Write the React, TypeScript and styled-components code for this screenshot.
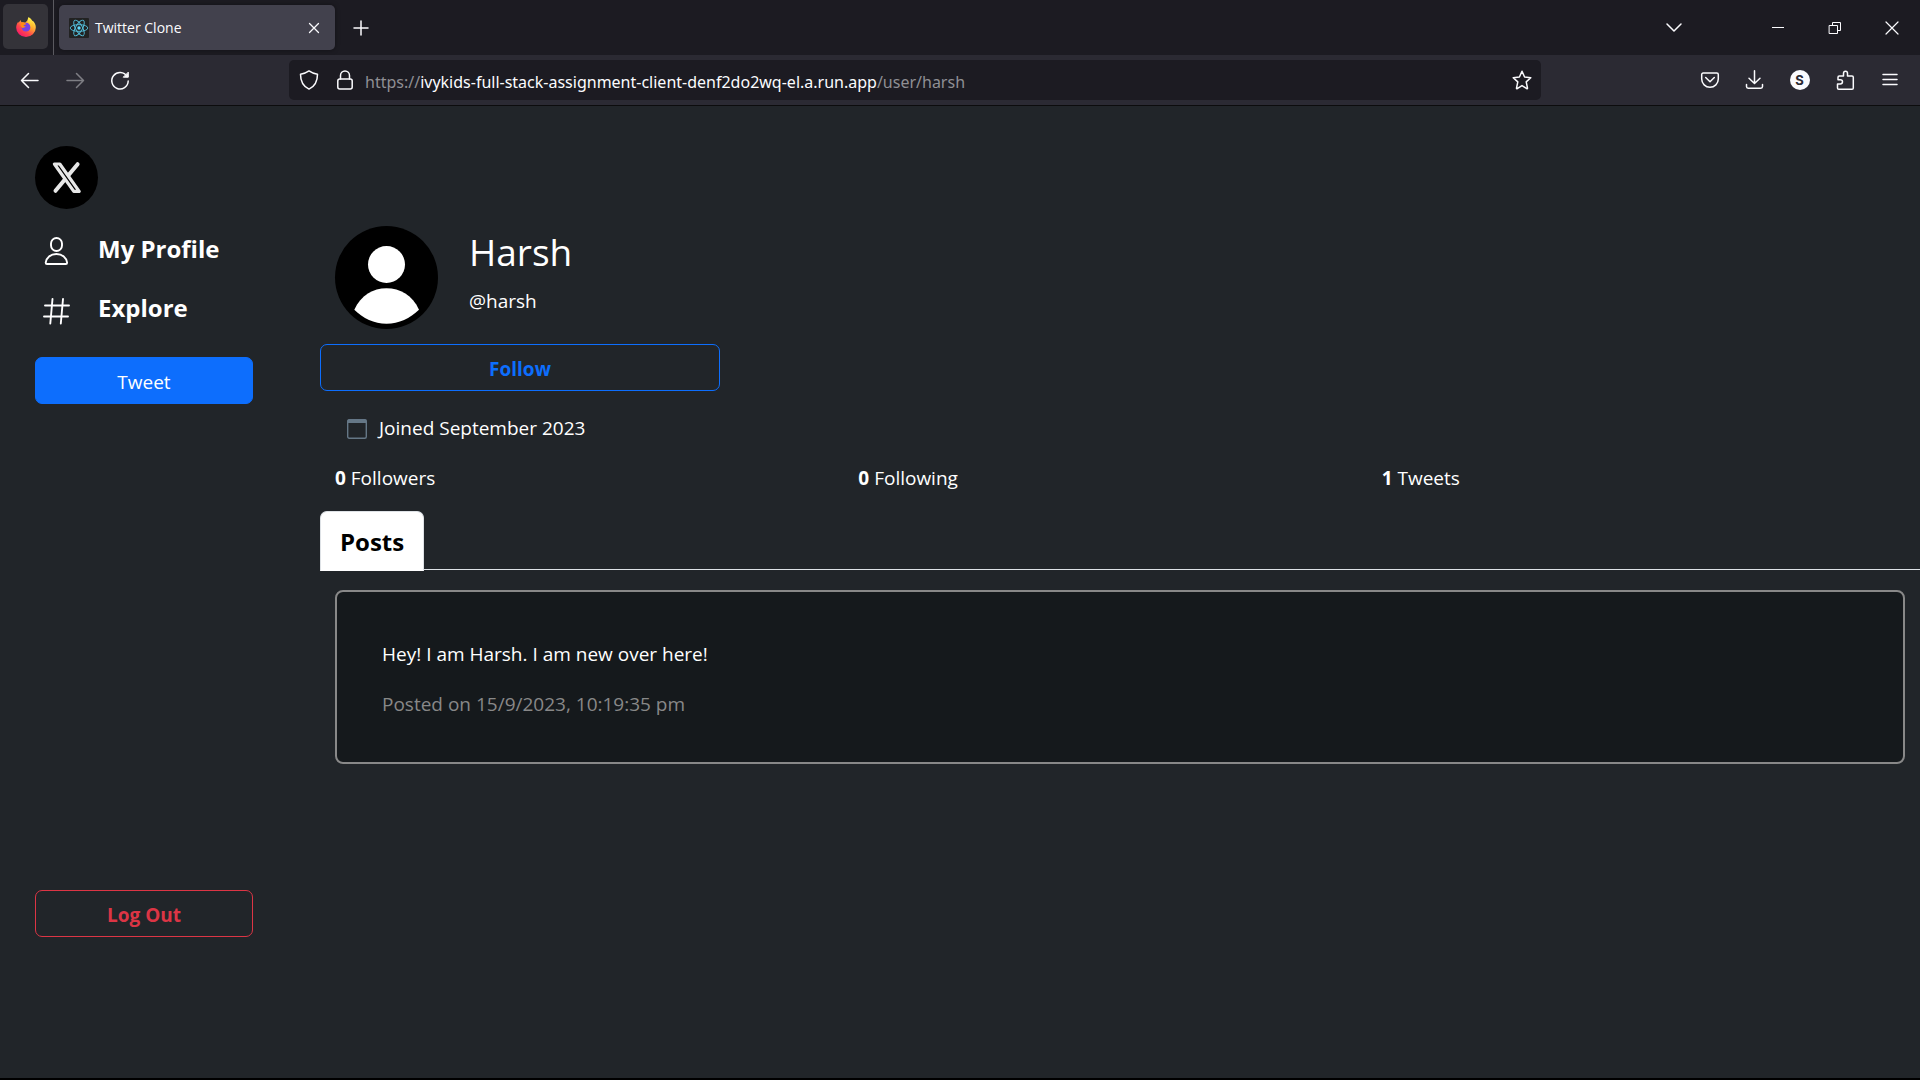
import React from "react";
import styled, { createGlobalStyle, css } from "styled-components";

const GlobalStyle = createGlobalStyle`
  *, *::before, *::after { box-sizing: border-box; }
  body {
    margin: 0;
    background: #212529;
    color: #fff;
    font-family: "Open Sans", "Noto Sans", sans-serif;
    font-size: 19px;
    line-height: 30px;
  }
  button { font: inherit; color: inherit; cursor: pointer; }
  h1, h2, p, ul { margin: 0; padding: 0; }
  svg { display: block; flex: none; overflow: visible; }
`;

const Window = styled.div`
  min-height: 100vh;
  display: flex;
  flex-direction: column;
  border-bottom: 2px solid #000;
`;

/* ---------- browser chrome ---------- */

const TabStrip = styled.header`
  display: flex;
  align-items: center;
  height: 55px;
  background: #1c1b22;
`;

const ViewButton = styled.button`
  display: grid;
  place-items: center;
  width: 45px;
  height: 45px;
  margin: 0 5px 2px 3px;
  padding: 0;
  border: 0;
  border-radius: 5px;
  background: #343339;
`;

const Divider = styled.span`
  width: 1px;
  height: 55px;
  background: #5b5a60;
`;

const BrowserTab = styled.div`
  display: flex;
  align-items: center;
  width: 276px;
  height: 45px;
  margin-left: 5px;
  padding: 0 10px;
  border-radius: 5px;
  background: #42414d;
  box-shadow: 0 0 5px rgba(0, 0, 0, 0.4);
`;

const TabTitle = styled.span`
  flex: 1;
  margin-left: 6px;
  padding-top: 1px;
  color: #fbfbfe;
  font-size: 14px;
  line-height: 20px;
`;

const PlainButton = styled.button<{ $width?: number; $dim?: boolean }>`
  display: grid;
  place-items: center;
  width: ${(p) => p.$width ?? 45}px;
  height: 40px;
  padding: 0;
  border: 0;
  background: none;
  color: #fbfbfe;
  opacity: ${(p) => (p.$dim ? 0.4 : 1)};
`;

const WindowControls = styled.div`
  display: flex;
  margin-left: auto;
`;

const ListTabs = styled.div`
  margin-right: 53px;
`;

const Toolbar = styled.nav`
  display: flex;
  align-items: center;
  height: 51px;
  padding: 0 8px 0 7px;
  background: #2b2a33;
  border-bottom: 1px solid #0c0c0d;
`;

const NavButtons = styled.div`
  display: flex;
  flex: 1 0 282px;
`;

const AddressBar = styled.div`
  display: flex;
  align-items: center;
  flex: 0 1 1252px;
  height: 40px;
  border-radius: 5px;
  background: #1c1b22;
`;

const Url = styled.span`
  flex: 1;
  margin-left: 4px;
  padding-top: 3px;
  overflow: hidden;
  white-space: nowrap;
  color: #8f8f94;
  font-family: "Noto Sans", "Open Sans", sans-serif;
  font-size: 16px;
  line-height: 24px;

  b { font-weight: 400; color: #fbfbfe; }
`;

const ToolbarActions = styled.div`
  display: flex;
  flex: 1 0 371px;
  justify-content: flex-end;
`;

const Account = styled.span`
  display: grid;
  place-items: center;
  width: 20px;
  height: 20px;
  border-radius: 50%;
  background: #fbfbfe;
  color: #2b2a33;
  font: 700 13px/20px Inter, sans-serif;
`;

/* ---------- page ---------- */

const Page = styled.div`
  flex: 1;
  display: grid;
  grid-template-columns: minmax(0, 1fr) minmax(0, 5fr);
`;

const Sidebar = styled.aside`
  display: flex;
  flex-direction: column;
  padding: 40px 67px 141px 35px;
`;

const Menu = styled.ul`
  display: flex;
  flex-direction: column;
  gap: 23px;
  margin: 22px 0 31px;
  list-style: none;
`;

const MenuLink = styled.a`
  display: flex;
  align-items: center;
  gap: 27px;
  padding-left: 8px;
  color: #fff;
  font-size: 24px;
  font-weight: 700;
  line-height: 36px;
  text-decoration: none;
`;

const ActionButton = styled.button<{ $variant: "primary" | "follow" | "danger" }>`
  height: 47px;
  padding: 2px 15px 0;
  border: 1px solid #0d6efd;
  border-radius: 7px;
  background: none;
  font-weight: 700;

  ${(p) => p.$variant === "primary" && css`
    background: #0d6efd;
    font-weight: 400;
  `}
  ${(p) => p.$variant === "follow" && css`
    width: 25%;
    min-width: 200px;
    color: #0d6efd;
  `}
  ${(p) => p.$variant === "danger" && css`
    margin-top: auto;
    border-color: #dc3545;
    color: #dc3545;
  `}
`;

const Main = styled.main`
  padding-top: 120px;
`;

const Profile = styled.section`
  display: flex;
  gap: 31px;
  padding: 0 15px;
  margin-bottom: 15px;
`;

const Name = styled.h1`
  font-size: 37px;
  font-weight: 400;
  line-height: 48px;
  margin: 2px 0 10px;
`;

const Joined = styled.p`
  display: flex;
  align-items: center;
  gap: 12px;
  padding-left: 27px;
  margin-top: 22px;
`;

const Stats = styled.section`
  display: grid;
  grid-template-columns: repeat(3, minmax(0, 1fr));
  padding: 0 15px;
  margin: 20px 0 18px;
`;

const Tabs = styled.div`
  display: flex;
  height: 59px;
  border-bottom: 1px solid #dee2e6;
`;

const Tab = styled.button`
  height: 60px;
  padding: 2px 19px 0;
  border: 1px solid #dee2e6;
  border-bottom-color: #fff;
  border-radius: 7px 7px 0 0;
  background: #fff;
  color: #000;
  font-size: 24px;
  font-weight: 700;
`;

const Post = styled.article`
  margin: 20px 15px;
  padding: 47px 45px 43px;
  border: 2px solid #888;
  border-radius: 8px;
  background: #15191c;
`;

const Posted = styled.p`
  margin-top: 20px;
  color: #888;
`;

/* ---------- drawings ---------- */

type IconProps = { size?: number; children: React.ReactNode };

const Line = ({ size = 20, children }: IconProps) => (
  <svg
    width={size}
    height={size}
    viewBox="0 0 20 20"
    fill="none"
    stroke="currentColor"
    strokeWidth="1.5"
    strokeLinecap="round"
    strokeLinejoin="round"
    aria-hidden="true"
  >
    {children}
  </svg>
);

const FirefoxLogo = () => (
  <svg width="20" height="20" viewBox="0 0 20 20" aria-hidden="true">
    <defs>
      <linearGradient id="ffBody" x1="0.85" y1="0.1" x2="0.2" y2="0.95">
        <stop offset="0" stopColor="#fff44f" />
        <stop offset="0.35" stopColor="#ffa436" />
        <stop offset="0.65" stopColor="#ff4a4a" />
        <stop offset="1" stopColor="#f5156c" />
      </linearGradient>
      <linearGradient id="ffTail" x1="0.5" y1="0" x2="0.5" y2="1">
        <stop offset="0" stopColor="#fff44f" />
        <stop offset="0.6" stopColor="#ffbd2e" />
        <stop offset="1" stopColor="#ff8a16" stopOpacity="0.3" />
      </linearGradient>
    </defs>
    <path
      d="M12.6 0.3C14.6 1.6 15.4 3 15.8 4.2c0.5-0.1 0.8-0.2 1-0.5C18.7 5.5 20 8 19.8 10.8A9.8 9.3 0 0 1 0.2 10.7C0.2 8.5 0.9 6.3 2.3 4.7c0 0.5 0.1 0.8 0.3 1.1C3.2 4.7 4.2 3.8 4.7 3c0 1 0.3 1.7 0.9 2.3 1.5-0.2 2.5 0 3.6 0.5C10.2 4.5 12.5 3.5 12.6 0.3z"
      fill="url(#ffBody)"
    />
    <circle cx="10" cy="10.2" r="4.4" fill="#7542e5" />
    <path d="M5.600 5.300C8 5 9.500 6 10.300 7.200 9 7.400 8 8 7.300 9c0.700 0.200 1.600 0.200 2.300 0-0.500 1.500-1.800 1.800-3.400 1.900C4 9.500 4 6.800 5.600 5.300z" fill="#ff8a16" />
    <path d="M12.600 0.300C17 3 17.500 6 17.600 9c-0.100 3-1.600 5-3.900 5.800 1.500-2.800 1.500-6-0.500-8.300-1.300-1.500-2.400-3.200-0.600-6.200z" fill="url(#ffTail)" />
  </svg>
);

const ReactLogo = () => (
  <svg width="20" height="20" viewBox="0 0 20 20" aria-hidden="true">
    <rect width="20" height="20" rx="1" fill="#222" />
    <g fill="none" stroke="#53c1de" strokeWidth="0.9">
      <ellipse cx="10" cy="10" rx="8.800" ry="3.400" />
      <ellipse cx="10" cy="10" rx="8.800" ry="3.400" transform="rotate(60 10 10)" />
      <ellipse cx="10" cy="10" rx="8.800" ry="3.400" transform="rotate(120 10 10)" />
    </g>
    <circle cx="10" cy="10" r="1.700" fill="#61dafb" />
  </svg>
);

const XLogo = () => (
  <svg width="63" height="63" viewBox="0 0 63 63" role="img" aria-label="X">
    <circle cx="31.500" cy="31.500" r="31.500" fill="#000" />
    <g fill="none" stroke="#e7e7e7" strokeLinecap="round" strokeLinejoin="round">
      <path d="M42.600 18.200L20.500 44.800" strokeWidth="4" />
      <path d="M19.400 18h5.400L44.200 45.400h-5.400z" strokeWidth="3.200" fill="#000" />
    </g>
  </svg>
);

const PersonIcon = () => (
  <svg width="28" height="32" viewBox="0 -2 28 32" fill="none" stroke="#fff" strokeWidth="1.900" aria-hidden="true">
    <rect x="8" y="3" width="11" height="13" rx="5.500" />
    <path d="M4 29c-1 0-1.300-0.500-1.300-1.300C3.300 22.500 7.500 19 13.400 19s10.100 3.500 10.700 8.700c0 0.800-0.400 1.300-1.300 1.300z" />
  </svg>
);

const HashIcon = () => (
  <svg width="28" height="32" viewBox="0 -4 28 32" fill="none" stroke="#fff" strokeWidth="1.900" strokeLinecap="round" aria-hidden="true">
    <path d="M9.500 3L7.300 27.500M20 3l-2.200 24.500M2 9.500h24M1 20.500h24" />
  </svg>
);

const Avatar = () => (
  <svg width="103" height="103" viewBox="0 0 103 103" role="img" aria-label="Harsh">
    <circle cx="51.500" cy="51.500" r="51.500" fill="#000" />
    <circle cx="51.500" cy="38.500" r="18.500" fill="#fff" />
    <path d="M19.300 83.800C26 69 38 62.300 51.500 62.300S77.500 69 84 83.800C75 92.500 64 97.800 51.500 97.800S28 92.500 19.300 83.800z" fill="#fff" />
  </svg>
);

const CalendarIcon = () => (
  <svg width="20" height="20" viewBox="0 -1 20 20" aria-hidden="true">
    <rect x="0.700" y="0.700" width="18.600" height="18.600" rx="1.500" fill="none" stroke="#657786" strokeWidth="1.400" />
    <path d="M0.500 1.500a1 1 0 0 1 1-1h17a1 1 0 0 1 1 1V4h-19z" fill="#657786" />
  </svg>
);

const stats = [
  { count: 0, label: "Followers" },
  { count: 0, label: "Following" },
  { count: 1, label: "Tweets" },
];

export default function App() {
  return (
    <Window>
      <GlobalStyle />
      <TabStrip>
        <ViewButton aria-label="Firefox View"><FirefoxLogo /></ViewButton>
        <Divider />
        <BrowserTab>
          <ReactLogo />
          <TabTitle>Twitter Clone</TabTitle>
          <PlainButton $width={22} aria-label="Close tab">
            <Line><path d="M5.500 5.500l9 9M14.500 5.500l-9 9" strokeWidth="1.300" /></Line>
          </PlainButton>
        </BrowserTab>
        <PlainButton $width={51} aria-label="New tab">
          <Line><path d="M10 3v14M3 10h14" /></Line>
        </PlainButton>
        <WindowControls>
          <ListTabs>
            <PlainButton aria-label="List all tabs">
              <Line><path d="M3 6l7 7 7-7" /></Line>
            </PlainButton>
          </ListTabs>
          <PlainButton $width={57} aria-label="Minimise">
            <Line><path d="M4 9.500h12" strokeWidth="1" strokeLinecap="butt" /></Line>
          </PlainButton>
          <PlainButton $width={57} aria-label="Restore">
            <Line><path d="M4.500 7.500h8v8h-8zM7.500 7.500v-3h8v8h-3" strokeWidth="1" strokeLinejoin="miter" /></Line>
          </PlainButton>
          <PlainButton $width={57} aria-label="Close window">
            <Line><path d="M4 4l12 12M16 4L4 16" strokeWidth="1.200" /></Line>
          </PlainButton>
        </WindowControls>
      </TabStrip>

      <Toolbar>
        <NavButtons>
          <PlainButton aria-label="Back">
            <Line><path d="M18 10.500H1.500M8.500 3.500l-7 7 7 7" /></Line>
          </PlainButton>
          <PlainButton $dim disabled aria-label="Forward">
            <Line><path d="M2 10.500h16.500M11.500 3.500l7 7-7 7" /></Line>
          </PlainButton>
          <PlainButton aria-label="Reload">
            <Line>
              <path d="M17 6.500A8.200 8.200 0 1 0 18.200 11" />
              <path d="M18.300 2.500v4.700h-4.700z" fill="currentColor" strokeWidth="1" />
            </Line>
          </PlainButton>
        </NavButtons>
        <AddressBar>
          <PlainButton $width={40} aria-label="Tracking protection">
            <Line><path d="M10 0.900C7.500 2.700 4.500 3.700 1.500 4.200c0 7.200 3 12.300 8.500 14.900 5.500-2.600 8.500-7.700 8.500-14.900-3-0.500-6-1.500-8.500-3.300z" /></Line>
          </PlainButton>
          <PlainButton $width={32} aria-label="Site information">
            <Line>
              <rect x="2.800" y="9" width="14.400" height="10" rx="2" />
              <path d="M5.500 9V5.500a4.500 4.500 0 0 1 9 0V9" />
            </Line>
          </PlainButton>
          <Url>https://<b>ivykids-full-stack-assignment-client-denf2do2wq-el.a.run.app</b>/user/harsh</Url>
          <PlainButton $width={38} aria-label="Bookmark this page">
            <Line><path d="M10 1.300l2.600 5.700 6.200 0.700-4.600 4.200 1.300 6.200c0.100 0.500-0.300 0.800-0.700 0.500L10 15.600l-4.800 3c-0.400 0.300-0.800 0-0.700-0.500l1.300-6.200L1.200 7.700l6.200-0.700z" /></Line>
          </PlainButton>
        </AddressBar>
        <ToolbarActions>
          <PlainButton aria-label="Save to Pocket">
            <Line>
              <path d="M3.200 3h13.600c0.900 0 1.500 0.600 1.500 1.500V9a8.300 8.300 0 0 1-16.600 0V4.500C1.700 3.600 2.300 3 3.200 3z" />
              <path d="M5.700 7.500L10 11.700l4.300-4.200" />
            </Line>
          </PlainButton>
          <PlainButton aria-label="Downloads">
            <Line><path d="M9.500 0.800v12.500M4 8.200L9.500 13.500l5.500-5.300M1.500 14.500v2c0 1 0.700 1.700 1.700 1.700h12.600c1 0 1.700-0.700 1.700-1.700v-2" /></Line>
          </PlainButton>
          <PlainButton aria-label="Account"><Account>S</Account></PlainButton>
          <PlainButton aria-label="Extensions">
            <Line><path d="M3.800 19.200h13.200c0.800 0 1.300-0.500 1.300-1.300V7.200c0-0.800-0.500-1.300-1.300-1.300H12.500V3.400c0-1.200-0.900-2.200-2-2.200s-2 1-2 2.200v2.500H4.300C3.500 5.900 3 6.400 3 7.200v2.500h2.200c1.300 0 2.300 0.900 2.300 2.100s-1 2.100-2.300 2.100H2.500v4c0 0.800 0.500 1.300 1.300 1.300z" /></Line>
          </PlainButton>
          <PlainButton aria-label="Application menu">
            <Line><path d="M3 4.500h14M3 9.500h14M3 14.500h14" /></Line>
          </PlainButton>
        </ToolbarActions>
      </Toolbar>

      <Page>
        <Sidebar>
          <XLogo />
          <nav>
            <Menu>
              <li><MenuLink href="#profile"><PersonIcon />My Profile</MenuLink></li>
              <li><MenuLink href="#explore"><HashIcon />Explore</MenuLink></li>
            </Menu>
          </nav>
          <ActionButton $variant="primary">Tweet</ActionButton>
          <ActionButton $variant="danger">Log Out</ActionButton>
        </Sidebar>
        <Main>
          <Profile>
            <Avatar />
            <div>
              <Name>Harsh</Name>
              <p>@harsh</p>
            </div>
          </Profile>
          <ActionButton $variant="follow">Follow</ActionButton>
          <Joined><CalendarIcon />Joined September 2023</Joined>
          <Stats>
            {stats.map((s) => (
              <p key={s.label}><b>{s.count}</b> {s.label}</p>
            ))}
          </Stats>
          <Tabs role="tablist">
            <Tab role="tab" aria-selected="true">Posts</Tab>
          </Tabs>
          <Post>
            <p>Hey! I am Harsh. I am new over here!</p>
            <Posted>Posted on 15/9/2023, 10:19:35 pm</Posted>
          </Post>
        </Main>
      </Page>
    </Window>
  );
}
